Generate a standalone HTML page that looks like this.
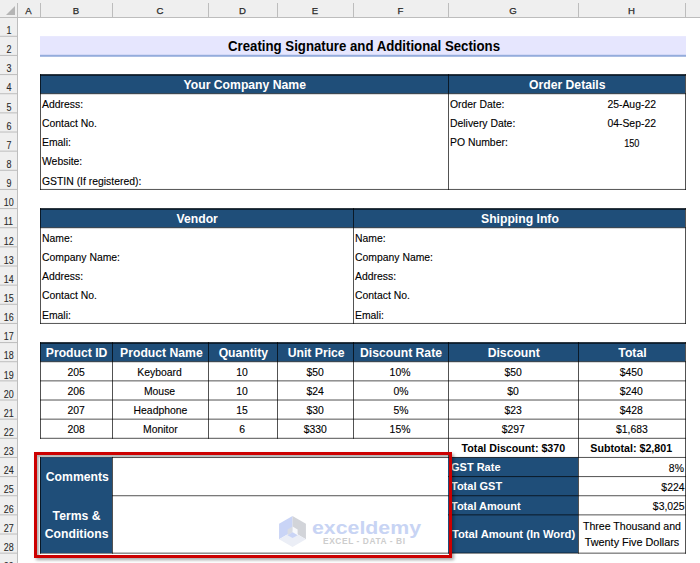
<!DOCTYPE html>
<html><head><meta charset="utf-8"><style>
html,body{margin:0;padding:0;width:700px;height:563px;overflow:hidden;background:#fff}
body{position:relative;font-family:"Liberation Sans",sans-serif}
div{position:absolute}
.t{white-space:nowrap;line-height:1}
.r{-webkit-text-stroke:0.12px currentColor}
.t span{display:inline-block}
.hr{text-align:center;font-size:10.4px;color:#2a2a2a;line-height:10px;-webkit-text-stroke:0.1px #2a2a2a}
.hr span{display:inline-block;transform:scaleX(0.86)}
.h{text-align:center;font-size:9.6px;color:#2a2a2a;line-height:10px;-webkit-text-stroke:0.25px #2a2a2a}
#wrap{left:0;top:0;width:700px;height:563px;background:#fff;}
</style></head><body><div id="wrap">
<svg width="700" height="563" style="position:absolute;left:0;top:0"><rect x="0" y="0" width="700" height="17" fill="#efefef"/><rect x="0" y="0" width="17" height="563" fill="#efefef"/><rect x="0" y="17" width="700" height="1" fill="#bdbdbd"/><rect x="17" y="3" width="1" height="560" fill="#bdbdbd"/><polygon points="6,15 15,6 15,15" fill="#b5b5b5"/><rect x="40" y="3" width="1" height="14" fill="#bdbdbd"/><rect x="112" y="3" width="1" height="14" fill="#bdbdbd"/><rect x="208" y="3" width="1" height="14" fill="#bdbdbd"/><rect x="277" y="3" width="1" height="14" fill="#bdbdbd"/><rect x="353" y="3" width="1" height="14" fill="#bdbdbd"/><rect x="448" y="3" width="1" height="14" fill="#bdbdbd"/><rect x="578" y="3" width="1" height="14" fill="#bdbdbd"/><rect x="685" y="3" width="1" height="14" fill="#bdbdbd"/><rect x="0" y="35.79" width="17" height="1" fill="#bdbdbd"/><rect x="0" y="54.94" width="17" height="1" fill="#bdbdbd"/><rect x="0" y="74.08" width="17" height="1" fill="#bdbdbd"/><rect x="0" y="93.22" width="17" height="1" fill="#bdbdbd"/><rect x="0" y="112.37" width="17" height="1" fill="#bdbdbd"/><rect x="0" y="131.51" width="17" height="1" fill="#bdbdbd"/><rect x="0" y="150.65" width="17" height="1" fill="#bdbdbd"/><rect x="0" y="169.79" width="17" height="1" fill="#bdbdbd"/><rect x="0" y="188.94" width="17" height="1" fill="#bdbdbd"/><rect x="0" y="208.08" width="17" height="1" fill="#bdbdbd"/><rect x="0" y="227.22" width="17" height="1" fill="#bdbdbd"/><rect x="0" y="246.37" width="17" height="1" fill="#bdbdbd"/><rect x="0" y="265.51" width="17" height="1" fill="#bdbdbd"/><rect x="0" y="284.65" width="17" height="1" fill="#bdbdbd"/><rect x="0" y="303.79" width="17" height="1" fill="#bdbdbd"/><rect x="0" y="322.94" width="17" height="1" fill="#bdbdbd"/><rect x="0" y="342.08" width="17" height="1" fill="#bdbdbd"/><rect x="0" y="361.22" width="17" height="1" fill="#bdbdbd"/><rect x="0" y="380.37" width="17" height="1" fill="#bdbdbd"/><rect x="0" y="399.51" width="17" height="1" fill="#bdbdbd"/><rect x="0" y="418.65" width="17" height="1" fill="#bdbdbd"/><rect x="0" y="437.80" width="17" height="1" fill="#bdbdbd"/><rect x="0" y="456.94" width="17" height="1" fill="#bdbdbd"/><rect x="0" y="476.08" width="17" height="1" fill="#bdbdbd"/><rect x="0" y="495.23" width="17" height="1" fill="#bdbdbd"/><rect x="0" y="514.37" width="17" height="1" fill="#bdbdbd"/><rect x="0" y="533.51" width="17" height="1" fill="#bdbdbd"/><rect x="0" y="552.65" width="17" height="1" fill="#bdbdbd"/><rect x="0" y="571.80" width="17" height="1" fill="#bdbdbd"/><rect x="40.00" y="36.14" width="646.00" height="19.14" fill="#e6e6fe"/><rect x="40.00" y="54.79" width="646.00" height="2.00" fill="#94acdc"/><rect x="40.00" y="74.43" width="645.00" height="19.14" fill="#1f4e79"/><rect x="40.00" y="74.08" width="646.00" height="1.80" fill="rgba(0,0,0,0.68)"/><rect x="40.00" y="93.22" width="646.00" height="1.00" fill="rgba(0,0,0,0.68)"/><rect x="40.00" y="188.94" width="646.00" height="1.00" fill="rgba(0,0,0,0.68)"/><rect x="40.00" y="74.08" width="1.00" height="115.86" fill="rgba(0,0,0,0.68)"/><rect x="448.00" y="74.08" width="1.00" height="115.86" fill="rgba(0,0,0,0.68)"/><rect x="685.00" y="74.08" width="1.00" height="115.86" fill="rgba(0,0,0,0.68)"/><rect x="40.00" y="208.43" width="645.00" height="19.14" fill="#1f4e79"/><rect x="40.00" y="208.08" width="646.00" height="1.80" fill="rgba(0,0,0,0.68)"/><rect x="40.00" y="227.22" width="646.00" height="1.00" fill="rgba(0,0,0,0.68)"/><rect x="40.00" y="322.94" width="646.00" height="1.00" fill="rgba(0,0,0,0.68)"/><rect x="40.00" y="208.08" width="1.00" height="115.86" fill="rgba(0,0,0,0.68)"/><rect x="353.00" y="208.08" width="1.00" height="115.86" fill="rgba(0,0,0,0.68)"/><rect x="685.00" y="208.08" width="1.00" height="115.86" fill="rgba(0,0,0,0.68)"/><rect x="40.00" y="342.43" width="645.00" height="19.14" fill="#1f4e79"/><rect x="40.00" y="342.08" width="646.00" height="1.80" fill="rgba(0,0,0,0.68)"/><rect x="40.00" y="361.22" width="646.00" height="1.00" fill="rgba(0,0,0,0.68)"/><rect x="40.00" y="380.37" width="646.00" height="1.00" fill="rgba(0,0,0,0.68)"/><rect x="40.00" y="399.51" width="646.00" height="1.00" fill="rgba(0,0,0,0.68)"/><rect x="40.00" y="418.65" width="646.00" height="1.00" fill="rgba(0,0,0,0.68)"/><rect x="40.00" y="437.80" width="646.00" height="1.00" fill="rgba(0,0,0,0.68)"/><rect x="40.00" y="342.08" width="1.00" height="96.71" fill="rgba(0,0,0,0.68)"/><rect x="112.00" y="342.08" width="1.00" height="96.71" fill="rgba(0,0,0,0.68)"/><rect x="208.00" y="342.08" width="1.00" height="96.71" fill="rgba(0,0,0,0.68)"/><rect x="277.00" y="342.08" width="1.00" height="96.71" fill="rgba(0,0,0,0.68)"/><rect x="353.00" y="342.08" width="1.00" height="96.71" fill="rgba(0,0,0,0.68)"/><rect x="448.00" y="342.08" width="1.00" height="211.57" fill="rgba(0,0,0,0.68)"/><rect x="578.00" y="342.08" width="1.00" height="211.57" fill="rgba(0,0,0,0.68)"/><rect x="685.00" y="342.08" width="1.00" height="211.57" fill="rgba(0,0,0,0.68)"/><rect x="448.00" y="457.29" width="130.00" height="95.72" fill="#1f4e79"/><rect x="40.00" y="456.94" width="646.00" height="1.00" fill="rgba(0,0,0,0.68)"/><rect x="40.00" y="495.23" width="646.00" height="1.00" fill="rgba(0,0,0,0.68)"/><rect x="40.00" y="552.65" width="646.00" height="1.00" fill="rgba(0,0,0,0.68)"/><rect x="448.00" y="476.08" width="238.00" height="1.00" fill="rgba(0,0,0,0.68)"/><rect x="448.00" y="514.37" width="238.00" height="1.00" fill="rgba(0,0,0,0.68)"/><rect x="40.00" y="457.29" width="72.00" height="95.72" fill="#1f4e79"/><rect x="40.00" y="456.94" width="1.00" height="96.72" fill="rgba(0,0,0,0.68)"/><rect x="112.00" y="456.94" width="1.00" height="96.72" fill="rgba(0,0,0,0.68)"/><polygon points="292.50,515.90 279.08,523.65 279.08,539.15 292.50,531.40" fill="#c9d4f6"/><polygon points="292.50,515.90 305.92,523.65 305.92,539.15 292.50,531.40" fill="#d2d4d9"/><polygon points="279.08,539.15 292.50,531.40 305.92,539.15 292.50,546.90" fill="#ebeef6"/><polygon points="292.60,526.50 287.58,529.40 287.58,535.20 292.60,532.30" fill="#d9dce3"/><polygon points="292.60,526.50 297.62,529.40 297.62,535.20 292.60,532.30" fill="#f8f9fc"/><polygon points="287.58,535.20 292.60,532.30 297.62,535.20 292.60,538.10" fill="#c9d4f6"/><text x="312" y="534" font-family="Liberation Sans" font-weight="bold" font-size="19" fill="#c8d4f4" textLength="109" lengthAdjust="spacingAndGlyphs">exceldemy</text><text x="323" y="544.2" font-family="Liberation Sans" font-size="8.4" font-weight="bold" fill="#cdcdcd" textLength="82" lengthAdjust="spacing">EXCEL - DATA - BI</text></svg>
<div class="h" style="left:17px;width:23px;top:6.0px">A</div><div class="h" style="left:40px;width:72px;top:6.0px">B</div><div class="h" style="left:112px;width:96px;top:6.0px">C</div><div class="h" style="left:208px;width:69px;top:6.0px">D</div><div class="h" style="left:277px;width:76px;top:6.0px">E</div><div class="h" style="left:353px;width:95px;top:6.0px">F</div><div class="h" style="left:448px;width:130px;top:6.0px">G</div><div class="h" style="left:578px;width:107px;top:6.0px">H</div><div class="hr" style="left:0px;width:17px;top:26.00px"><span>1</span></div><div class="hr" style="left:0px;width:17px;top:45.14px"><span>2</span></div><div class="hr" style="left:0px;width:17px;top:64.29px"><span>3</span></div><div class="hr" style="left:0px;width:17px;top:83.43px"><span>4</span></div><div class="hr" style="left:0px;width:17px;top:102.57px"><span>5</span></div><div class="hr" style="left:0px;width:17px;top:121.72px"><span>6</span></div><div class="hr" style="left:0px;width:17px;top:140.86px"><span>7</span></div><div class="hr" style="left:0px;width:17px;top:160.00px"><span>8</span></div><div class="hr" style="left:0px;width:17px;top:179.14px"><span>9</span></div><div class="hr" style="left:0px;width:17px;top:198.29px"><span>10</span></div><div class="hr" style="left:0px;width:17px;top:217.43px"><span>11</span></div><div class="hr" style="left:0px;width:17px;top:236.57px"><span>12</span></div><div class="hr" style="left:0px;width:17px;top:255.72px"><span>13</span></div><div class="hr" style="left:0px;width:17px;top:274.86px"><span>14</span></div><div class="hr" style="left:0px;width:17px;top:294.00px"><span>15</span></div><div class="hr" style="left:0px;width:17px;top:313.14px"><span>16</span></div><div class="hr" style="left:0px;width:17px;top:332.29px"><span>17</span></div><div class="hr" style="left:0px;width:17px;top:351.43px"><span>18</span></div><div class="hr" style="left:0px;width:17px;top:370.57px"><span>19</span></div><div class="hr" style="left:0px;width:17px;top:389.72px"><span>20</span></div><div class="hr" style="left:0px;width:17px;top:408.86px"><span>21</span></div><div class="hr" style="left:0px;width:17px;top:428.00px"><span>22</span></div><div class="hr" style="left:0px;width:17px;top:447.15px"><span>23</span></div><div class="hr" style="left:0px;width:17px;top:466.29px"><span>24</span></div><div class="hr" style="left:0px;width:17px;top:485.43px"><span>25</span></div><div class="hr" style="left:0px;width:17px;top:504.58px"><span>26</span></div><div class="hr" style="left:0px;width:17px;top:523.72px"><span>27</span></div><div class="hr" style="left:0px;width:17px;top:542.86px"><span>28</span></div><div class="hr" style="left:0px;width:17px;top:562.00px"><span>29</span></div><div class="t" style="left:42px;width:645px;text-align:center;top:38.94px;font-size:14.0px;font-weight:bold;color:#000"><span style="transform:scaleX(0.944);transform-origin:center">Creating Signature and Additional Sections</span></div><div class="t" style="left:41px;width:408px;text-align:center;top:78.69px;font-size:12.5px;font-weight:bold;color:#fff"><span style="transform:scaleX(0.975);transform-origin:center">Your Company Name</span></div><div class="t" style="left:449px;width:237px;text-align:center;top:78.69px;font-size:12.5px;font-weight:bold;color:#fff"><span style="transform:scaleX(0.975);transform-origin:center">Order Details</span></div><div class="t r" style="left:42px;top:99.00px;font-size:11.0px;font-weight:normal;color:#000"><span style="transform:scaleX(0.945);transform-origin:left">Address:</span></div><div class="t r" style="left:42px;top:118.15px;font-size:11.0px;font-weight:normal;color:#000"><span style="transform:scaleX(0.945);transform-origin:left">Contact No.</span></div><div class="t r" style="left:42px;top:137.29px;font-size:11.0px;font-weight:normal;color:#000"><span style="transform:scaleX(0.945);transform-origin:left">Emali:</span></div><div class="t r" style="left:42px;top:156.43px;font-size:11.0px;font-weight:normal;color:#000"><span style="transform:scaleX(0.945);transform-origin:left">Website:</span></div><div class="t r" style="left:42px;top:175.58px;font-size:11.0px;font-weight:normal;color:#000"><span style="transform:scaleX(0.945);transform-origin:left">GSTIN (If registered):</span></div><div class="t r" style="left:450px;top:99.00px;font-size:11.0px;font-weight:normal;color:#000"><span style="transform:scaleX(0.945);transform-origin:left">Order Date:</span></div><div class="t r" style="left:450px;top:118.15px;font-size:11.0px;font-weight:normal;color:#000"><span style="transform:scaleX(0.945);transform-origin:left">Delivery Date:</span></div><div class="t r" style="left:450px;top:137.29px;font-size:11.0px;font-weight:normal;color:#000"><span style="transform:scaleX(0.945);transform-origin:left">PO Number:</span></div><div class="t r" style="left:578px;width:107px;text-align:center;top:99.00px;font-size:11.0px;font-weight:normal;color:#000"><span style="transform:scaleX(0.945);transform-origin:center">25-Aug-22</span></div><div class="t r" style="left:578px;width:107px;text-align:center;top:118.15px;font-size:11.0px;font-weight:normal;color:#000"><span style="transform:scaleX(0.945);transform-origin:center">04-Sep-22</span></div><div class="t r" style="left:578px;width:107px;text-align:center;top:137.71px;font-size:10.5px;font-weight:normal;color:#000"><span style="transform:scaleX(0.87);transform-origin:center">150</span></div><div class="t" style="left:41px;width:313px;text-align:center;top:212.69px;font-size:12.5px;font-weight:bold;color:#fff"><span style="transform:scaleX(0.975);transform-origin:center">Vendor</span></div><div class="t" style="left:354px;width:332px;text-align:center;top:212.69px;font-size:12.5px;font-weight:bold;color:#fff"><span style="transform:scaleX(0.975);transform-origin:center">Shipping Info</span></div><div class="t r" style="left:42px;top:233.00px;font-size:11.0px;font-weight:normal;color:#000"><span style="transform:scaleX(0.945);transform-origin:left">Name:</span></div><div class="t r" style="left:355px;top:233.00px;font-size:11.0px;font-weight:normal;color:#000"><span style="transform:scaleX(0.945);transform-origin:left">Name:</span></div><div class="t r" style="left:42px;top:252.15px;font-size:11.0px;font-weight:normal;color:#000"><span style="transform:scaleX(0.945);transform-origin:left">Company Name:</span></div><div class="t r" style="left:355px;top:252.15px;font-size:11.0px;font-weight:normal;color:#000"><span style="transform:scaleX(0.945);transform-origin:left">Company Name:</span></div><div class="t r" style="left:42px;top:271.29px;font-size:11.0px;font-weight:normal;color:#000"><span style="transform:scaleX(0.945);transform-origin:left">Address:</span></div><div class="t r" style="left:355px;top:271.29px;font-size:11.0px;font-weight:normal;color:#000"><span style="transform:scaleX(0.945);transform-origin:left">Address:</span></div><div class="t r" style="left:42px;top:290.43px;font-size:11.0px;font-weight:normal;color:#000"><span style="transform:scaleX(0.945);transform-origin:left">Contact No.</span></div><div class="t r" style="left:355px;top:290.43px;font-size:11.0px;font-weight:normal;color:#000"><span style="transform:scaleX(0.945);transform-origin:left">Contact No.</span></div><div class="t r" style="left:42px;top:309.58px;font-size:11.0px;font-weight:normal;color:#000"><span style="transform:scaleX(0.945);transform-origin:left">Emali:</span></div><div class="t r" style="left:355px;top:309.58px;font-size:11.0px;font-weight:normal;color:#000"><span style="transform:scaleX(0.945);transform-origin:left">Emali:</span></div><div class="t" style="left:41px;width:72px;text-align:center;top:346.69px;font-size:12.5px;font-weight:bold;color:#fff"><span style="transform:scaleX(0.975);transform-origin:center">Product ID</span></div><div class="t" style="left:113px;width:96px;text-align:center;top:346.69px;font-size:12.5px;font-weight:bold;color:#fff"><span style="transform:scaleX(0.975);transform-origin:center">Product Name</span></div><div class="t" style="left:209px;width:69px;text-align:center;top:346.69px;font-size:12.5px;font-weight:bold;color:#fff"><span style="transform:scaleX(0.975);transform-origin:center">Quantity</span></div><div class="t" style="left:278px;width:76px;text-align:center;top:346.69px;font-size:12.5px;font-weight:bold;color:#fff"><span style="transform:scaleX(0.975);transform-origin:center">Unit Price</span></div><div class="t" style="left:354px;width:95px;text-align:center;top:346.69px;font-size:12.5px;font-weight:bold;color:#fff"><span style="transform:scaleX(0.975);transform-origin:center">Discount Rate</span></div><div class="t" style="left:449px;width:130px;text-align:center;top:346.69px;font-size:12.5px;font-weight:bold;color:#fff"><span style="transform:scaleX(0.975);transform-origin:center">Discount</span></div><div class="t" style="left:579px;width:107px;text-align:center;top:346.69px;font-size:12.5px;font-weight:bold;color:#fff"><span style="transform:scaleX(0.975);transform-origin:center">Total</span></div><div class="t r" style="left:40px;width:72px;text-align:center;top:367.01px;font-size:11.0px;font-weight:normal;color:#000"><span style="transform:scaleX(0.945);transform-origin:center">205</span></div><div class="t r" style="left:112px;width:96px;text-align:center;top:367.01px;font-size:11.0px;font-weight:normal;color:#000"><span style="transform:scaleX(0.945);transform-origin:center">Keyboard</span></div><div class="t r" style="left:208px;width:69px;text-align:center;top:367.01px;font-size:11.0px;font-weight:normal;color:#000"><span style="transform:scaleX(0.945);transform-origin:center">10</span></div><div class="t r" style="left:277px;width:76px;text-align:center;top:367.01px;font-size:11.0px;font-weight:normal;color:#000"><span style="transform:scaleX(0.945);transform-origin:center">$50</span></div><div class="t r" style="left:353px;width:95px;text-align:center;top:367.01px;font-size:11.0px;font-weight:normal;color:#000"><span style="transform:scaleX(0.945);transform-origin:center">10%</span></div><div class="t r" style="left:448px;width:130px;text-align:center;top:367.01px;font-size:11.0px;font-weight:normal;color:#000"><span style="transform:scaleX(0.945);transform-origin:center">$50</span></div><div class="t r" style="left:578px;width:107px;text-align:center;top:367.01px;font-size:11.0px;font-weight:normal;color:#000"><span style="transform:scaleX(0.945);transform-origin:center">$450</span></div><div class="t r" style="left:40px;width:72px;text-align:center;top:386.15px;font-size:11.0px;font-weight:normal;color:#000"><span style="transform:scaleX(0.945);transform-origin:center">206</span></div><div class="t r" style="left:112px;width:96px;text-align:center;top:386.15px;font-size:11.0px;font-weight:normal;color:#000"><span style="transform:scaleX(0.945);transform-origin:center">Mouse</span></div><div class="t r" style="left:208px;width:69px;text-align:center;top:386.15px;font-size:11.0px;font-weight:normal;color:#000"><span style="transform:scaleX(0.945);transform-origin:center">10</span></div><div class="t r" style="left:277px;width:76px;text-align:center;top:386.15px;font-size:11.0px;font-weight:normal;color:#000"><span style="transform:scaleX(0.945);transform-origin:center">$24</span></div><div class="t r" style="left:353px;width:95px;text-align:center;top:386.15px;font-size:11.0px;font-weight:normal;color:#000"><span style="transform:scaleX(0.945);transform-origin:center">0%</span></div><div class="t r" style="left:448px;width:130px;text-align:center;top:386.15px;font-size:11.0px;font-weight:normal;color:#000"><span style="transform:scaleX(0.945);transform-origin:center">$0</span></div><div class="t r" style="left:578px;width:107px;text-align:center;top:386.15px;font-size:11.0px;font-weight:normal;color:#000"><span style="transform:scaleX(0.945);transform-origin:center">$240</span></div><div class="t r" style="left:40px;width:72px;text-align:center;top:405.29px;font-size:11.0px;font-weight:normal;color:#000"><span style="transform:scaleX(0.945);transform-origin:center">207</span></div><div class="t r" style="left:112px;width:96px;text-align:center;top:405.29px;font-size:11.0px;font-weight:normal;color:#000"><span style="transform:scaleX(0.945);transform-origin:center">Headphone</span></div><div class="t r" style="left:208px;width:69px;text-align:center;top:405.29px;font-size:11.0px;font-weight:normal;color:#000"><span style="transform:scaleX(0.945);transform-origin:center">15</span></div><div class="t r" style="left:277px;width:76px;text-align:center;top:405.29px;font-size:11.0px;font-weight:normal;color:#000"><span style="transform:scaleX(0.945);transform-origin:center">$30</span></div><div class="t r" style="left:353px;width:95px;text-align:center;top:405.29px;font-size:11.0px;font-weight:normal;color:#000"><span style="transform:scaleX(0.945);transform-origin:center">5%</span></div><div class="t r" style="left:448px;width:130px;text-align:center;top:405.29px;font-size:11.0px;font-weight:normal;color:#000"><span style="transform:scaleX(0.945);transform-origin:center">$23</span></div><div class="t r" style="left:578px;width:107px;text-align:center;top:405.29px;font-size:11.0px;font-weight:normal;color:#000"><span style="transform:scaleX(0.945);transform-origin:center">$428</span></div><div class="t r" style="left:40px;width:72px;text-align:center;top:424.43px;font-size:11.0px;font-weight:normal;color:#000"><span style="transform:scaleX(0.945);transform-origin:center">208</span></div><div class="t r" style="left:112px;width:96px;text-align:center;top:424.43px;font-size:11.0px;font-weight:normal;color:#000"><span style="transform:scaleX(0.945);transform-origin:center">Monitor</span></div><div class="t r" style="left:208px;width:69px;text-align:center;top:424.43px;font-size:11.0px;font-weight:normal;color:#000"><span style="transform:scaleX(0.945);transform-origin:center">6</span></div><div class="t r" style="left:277px;width:76px;text-align:center;top:424.43px;font-size:11.0px;font-weight:normal;color:#000"><span style="transform:scaleX(0.945);transform-origin:center">$330</span></div><div class="t r" style="left:353px;width:95px;text-align:center;top:424.43px;font-size:11.0px;font-weight:normal;color:#000"><span style="transform:scaleX(0.945);transform-origin:center">15%</span></div><div class="t r" style="left:448px;width:130px;text-align:center;top:424.43px;font-size:11.0px;font-weight:normal;color:#000"><span style="transform:scaleX(0.945);transform-origin:center">$297</span></div><div class="t r" style="left:578px;width:107px;text-align:center;top:424.43px;font-size:11.0px;font-weight:normal;color:#000"><span style="transform:scaleX(0.945);transform-origin:center">$1,683</span></div><div class="t" style="left:448px;width:130px;text-align:center;top:443.18px;font-size:11.0px;font-weight:bold;color:#000"><span style="transform:scaleX(0.97);transform-origin:center">Total Discount: $370</span></div><div class="t" style="left:578px;width:107px;text-align:center;top:443.18px;font-size:11.0px;font-weight:bold;color:#000"><span style="transform:scaleX(0.97);transform-origin:center">Subtotal: $2,801</span></div><div class="t" style="left:451px;top:462.32px;font-size:11.0px;font-weight:bold;color:#fff"><span style="transform:scaleX(1.0);transform-origin:left">GST Rate</span></div><div class="t" style="left:451px;top:481.46px;font-size:11.0px;font-weight:bold;color:#fff"><span style="transform:scaleX(1.0);transform-origin:left">Total GST</span></div><div class="t" style="left:451px;top:500.61px;font-size:11.0px;font-weight:bold;color:#fff"><span style="transform:scaleX(1.0);transform-origin:left">Total Amount</span></div><div class="t" style="left:451.5px;top:528.89px;font-size:11.0px;font-weight:bold;color:#fff"><span style="transform:scaleX(1.02);transform-origin:left">Total Amount (In Word)</span></div><div class="t r" style="left:578px;width:106.3px;text-align:right;top:462.72px;font-size:11.0px;font-weight:normal;color:#000"><span style="transform:scaleX(0.945);transform-origin:right">8%</span></div><div class="t r" style="left:578px;width:106.3px;text-align:right;top:481.86px;font-size:11.0px;font-weight:normal;color:#000"><span style="transform:scaleX(0.945);transform-origin:right">$224</span></div><div class="t r" style="left:578px;width:106.3px;text-align:right;top:501.01px;font-size:11.0px;font-weight:normal;color:#000"><span style="transform:scaleX(0.945);transform-origin:right">$3,025</span></div><div class="t r" style="left:578px;width:107px;text-align:center;top:521.25px;font-size:11.0px;font-weight:normal;color:#000"><span style="transform:scaleX(0.962);transform-origin:center">Three Thousand and</span></div><div class="t r" style="left:578px;width:107px;text-align:center;top:537.09px;font-size:11.0px;font-weight:normal;color:#000"><span style="transform:scaleX(0.985);transform-origin:center">Twenty Five Dollars</span></div><div class="t" style="left:41px;width:72px;text-align:center;top:471.49px;font-size:12.5px;font-weight:bold;color:#fff"><span style="transform:scaleX(0.975);transform-origin:center">Comments</span></div><div class="t" style="left:41px;width:72px;text-align:center;top:509.64px;font-size:12.5px;font-weight:bold;color:#fff"><span style="transform:scaleX(0.975);transform-origin:center">Terms &amp;</span></div><div class="t" style="left:41px;width:72px;text-align:center;top:527.62px;font-size:12.5px;font-weight:bold;color:#fff"><span style="transform:scaleX(0.975);transform-origin:center">Conditions</span></div><div style="left:34px;top:452px;width:412px;height:100px;border:3px solid #cc0000;box-shadow:2px 2px 3px rgba(0,0,0,0.35), inset 2px 2px 2px rgba(0,0,0,0.3)"></div>
</div></body></html>
